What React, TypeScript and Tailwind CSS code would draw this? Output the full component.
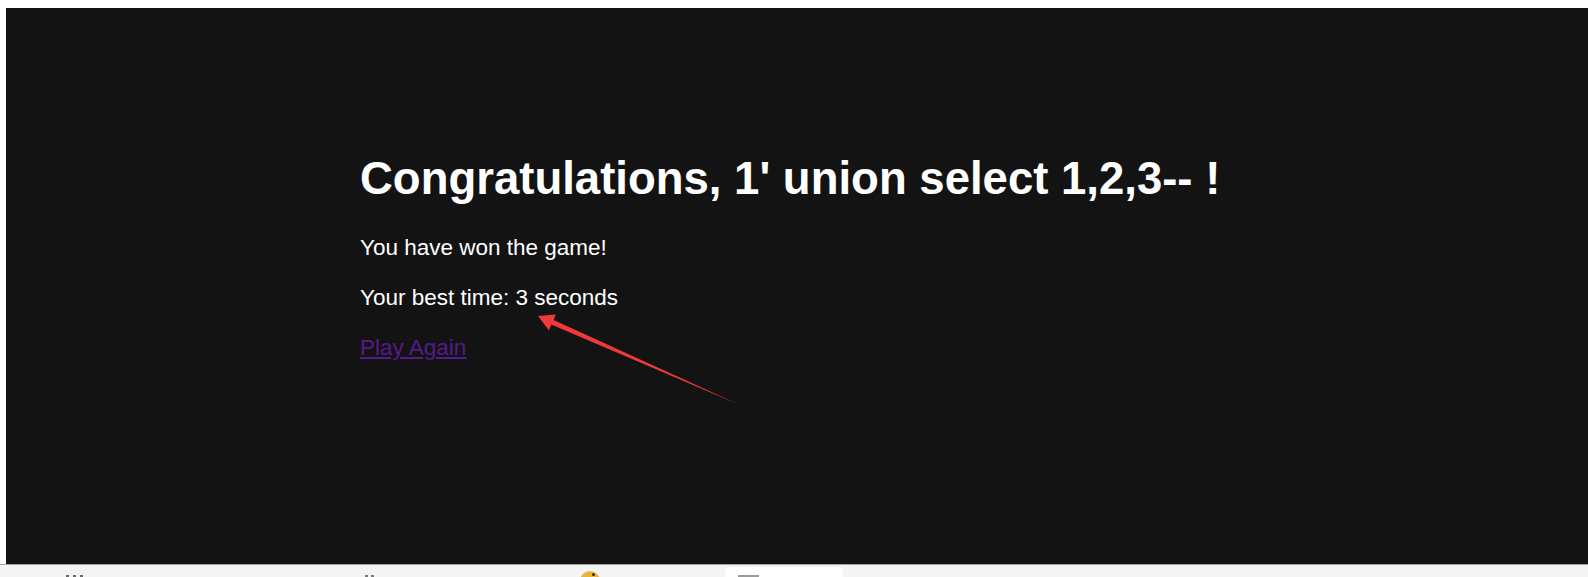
export default function App() {
  return (
    <div className="relative w-[1588px] h-[577px] overflow-hidden bg-white font-['Liberation_Sans',Arial,sans-serif]">
      <div className="pt-[8px] pl-[6px]">
        <div className="h-[556px] bg-[#131313] pt-[145px] pl-[354px] text-white">
          <h1 className="text-[45.5px] leading-[52px] font-bold">
            Congratulations, 1' union select 1,2,3-- !
          </h1>
          <div className="mt-[30px] flex flex-col gap-[24px] text-[22.5px] leading-[26px]">
            <p>You have won the game!</p>
            <p>Your best time: 3 seconds</p>
            <p>
              <a href="#" className="text-[#551a8b] underline">
                Play Again
              </a>
            </p>
          </div>
        </div>
      </div>
      <div className="h-px bg-[#a3a3a3]" />
      <div className="h-[12px] bg-[#f4f4f4] flex items-start overflow-hidden relative">
        <div className="ml-[66px] mt-[10px] flex gap-[4px]">
          <span className="w-[3px] h-[2px] bg-[#6b6b6b]" />
          <span className="w-[3px] h-[2px] bg-[#6b6b6b]" />
          <span className="w-[3px] h-[2px] bg-[#6b6b6b]" />
        </div>
        <div className="ml-[282px] mt-[10px] flex gap-[3px]">
          <span className="w-[3px] h-[2px] bg-[#7a7a7a]" />
          <span className="w-[3px] h-[2px] bg-[#7a7a7a]" />
        </div>
        <div className="ml-[206px] mt-[6px] w-[20px] h-[20px] rounded-full bg-[#e8b53a] relative">
          <span className="absolute left-[12px] top-[2px] w-[3px] h-[3px] rounded-full bg-[#3a2a10]" />
        </div>
        <div className="ml-[125px] mt-[2px] w-[118px] h-[20px] rounded-[4px] bg-white pl-[13px] pt-[8px]">
          <div className="w-[21px] h-[3px] bg-[#9a9a9a]" />
        </div>
      </div>
      <svg
        className="absolute left-0 top-0 pointer-events-none"
        width="1588"
        height="577"
        viewBox="0 0 1588 577"
      >
        <polygon
          points="538,316 555.8,314.6 553.6,320.0 741,405.6 551.2,324.6 549,330.6"
          fill="#f03a3a"
        />
      </svg>
    </div>
  );
}
